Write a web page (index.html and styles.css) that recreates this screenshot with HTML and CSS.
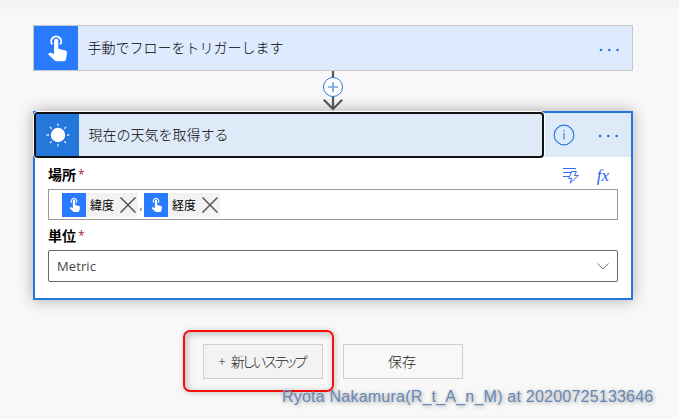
FILE: index.html
```html
<!DOCTYPE html>
<html lang="ja">
<head>
<meta charset="utf-8">
<title>フロー</title>
<link rel="stylesheet" href="styles.css">
</head>
<body>
<svg class="defs" width="0" height="0" aria-hidden="true">
  <symbol id="touch" viewBox="0 0 22 29">
    <path d="M5.200 10.400A5 5 0 1 1 13.200 10.400" fill="none" stroke="currentColor" stroke-width="1.900"/>
    <path d="M7.100 7a2.100 2.100 0 0 1 4.200 0v8l7.200 1.800q1.800.6 1.600 2.500l-1.100 6.200q-.4 2-2.400 2h-7q-1.300 0-2.200-.9l-6.300-6 .9-1.100q.7-.7 1.700-.4l3.400 1.200z" transform="translate(0 -.3)" fill="currentColor"/>
  </symbol>
</svg>
<div class="topbar"></div>
<main class="flow">
  <section class="trigger">
    <div class="tile"><svg class="hand"><use href="#touch"/></svg></div>
    <h2 class="title">手動でフローをトリガーします</h2>
    <svg class="dots" viewBox="0 0 22 4"><circle cx="2" cy="2" r="1.300"/><circle cx="10.300" cy="2" r="1.300"/><circle cx="18.600" cy="2" r="1.300"/></svg>
  </section>
  <svg class="connector" viewBox="0 0 40 40">
    <path d="M20 0V38M10.800 28.800L20 38l9.200-9.200" fill="none" stroke="#555" stroke-width="2.200"/>
    <circle cx="20" cy="16" r="9.500" fill="#fff" stroke="#2478dc"/>
    <path d="M20 11v10M15 16h10" stroke="#6aa5e8" stroke-width="1.700"/>
  </svg>
  <section class="action">
    <header class="head">
      <div class="focus">
        <div class="tile sun-tile">
          <svg class="sun" viewBox="0 0 24 24"><circle cx="12" cy="12" r="7.200" fill="#fff"/><path d="M12 .5v2.500M12 21v2.500M.5 12H3M21 12h2.500M3.900 3.900l1.800 1.800M18.300 18.300l1.800 1.800M3.900 20.100l1.800-1.800M18.300 5.700l1.800-1.800" stroke="#d6e8fb" stroke-width="1.300"/></svg>
        </div>
        <h2 class="title">現在の天気を取得する</h2>
      </div>
      <svg class="info" viewBox="0 0 22 22"><circle cx="11" cy="11" r="9.800" fill="none" stroke="#2b7bd9" stroke-width="1.200"/><path d="M11 9v6.500M11 6v1.600" stroke="#5595e0" stroke-width="1.500"/></svg>
      <svg class="dots" viewBox="0 0 22 4"><circle cx="2" cy="2" r="1.300"/><circle cx="10.300" cy="2" r="1.300"/><circle cx="18.600" cy="2" r="1.300"/></svg>
    </header>
    <div class="body">
      <div class="label">場所<span class="req">*</span>
        <div class="tools">
          <svg class="dyn" viewBox="0 0 18 18"><path d="M1 1.500h13M1 5.500h13M1 9.500h6" stroke="#2b6ff5" stroke-width="1.100"/><path d="M9.700 4.500h4.800l-2 4h4L8 16.200l1.800-4.700H6.700z" fill="#fff" stroke="#3a6cf0"/></svg>
          <span class="fx">fx</span>
        </div>
      </div>
      <div class="input">
        <span class="token"><span class="chip"><svg><use href="#touch"/></svg></span><span>緯度</span><svg class="x" viewBox="0 0 16 16"><path d="M.5.5l15 15M15.500.5l-15 15" stroke="#555" stroke-width="1.500"/></svg></span>
        <span class="comma">,</span>
        <span class="token"><span class="chip"><svg><use href="#touch"/></svg></span><span>経度</span><svg class="x" viewBox="0 0 16 16"><path d="M.5.5l15 15M15.500.5l-15 15" stroke="#555" stroke-width="1.500"/></svg></span>
      </div>
      <div class="label unit">単位<span class="req">*</span></div>
      <div class="select"><span>Metric</span><svg viewBox="0 0 12 7"><path d="M.5.5L6 6 11.500.5" fill="none" stroke="#777"/></svg></div>
    </div>
  </section>
  <div class="buttons">
    <button class="btn new"><span class="plus">+</span><span class="narrow">新しいステップ</span></button>
    <button class="btn">保存</button>
  </div>
</main>
<div class="marker"></div>
<div class="credit">Ryota Nakamura(R_t_A_n_M) at 20200725133646</div>
</body>
</html>
```

FILE: styles.css
```css
* { box-sizing: border-box; }
body {
  margin: 0;
  height: 419px;
  overflow: hidden;
  position: relative;
  background: #f8f8f8;
  color: #000;
  font-family: "Open Sans", "Noto Sans CJK JP", sans-serif;
  font-size: 14px;
}
svg { display: block; flex: none; }
.defs { position: absolute; }
.topbar { height: 9px; background: #f3f3f3; }
.flow { width: 600px; margin: 16px 0 0 33px; }
.trigger {
  display: flex;
  align-items: center;
  height: 46px;
  border: 1px solid #c8c8c8;
  background: #deebff;
}
.tile {
  display: flex;
  align-items: center;
  justify-content: center;
  width: 44px;
  height: 44px;
  background: #287aff;
  color: #fff;
}
.hand { width: 22px; height: 29px; margin: 0 0 0 3px; }
.title {
  flex: 1;
  margin: 0 0 0 9.500px;
  font-size: 14px;
  font-weight: 300;
  line-height: 20px;
}
.dots { width: 22px; height: 4px; margin: 3px 11px 0 0; fill: #2176d9; }
.connector { width: 40px; height: 40px; margin: 0 auto; }
.action {
  height: 189px;
  border: 2px solid #2478dc;
  background: #fff;
  box-shadow: 0 0 14px rgba(0, 0, 0, .32);
}
.head { display: flex; align-items: center; height: 44px; background: #deeaf8; }
.focus {
  display: flex;
  align-items: center;
  width: 510px;
  height: 46px;
  margin: -1px 0 0 -1px;
  border: 2px solid #111;
  border-radius: 4px;
  background: #deeaf8;
  box-shadow: 0 0 0 1px #fff;
}
.sun-tile { width: 43px; height: 42px; background: #2478dc; }
.sun { width: 24px; height: 24px; }
.info { width: 22px; height: 22px; margin: 0 auto 0 9px; }
.head .dots { margin: 2px 11px 0 0; }
.body { padding: 8px 13px 0; }
.label {
  display: flex;
  align-items: center;
  height: 18px;
  font-weight: 700;
  font-size: 14px;
}
.req { margin-left: 2px; color: #a4262c; font-weight: 400; font-size: 12px; }
.tools { display: flex; align-items: center; margin: 3px 9px 0 auto; gap: 17px; }
.dyn { width: 18px; height: 18px; }
.fx {
  font: italic 400 17px/18px "Liberation Serif", serif;
  color: #2b62f0;
}
.input {
  display: flex;
  align-items: center;
  height: 31px;
  margin-top: 6px;
  padding-left: 13px;
  border: 1px solid #999;
}
.token {
  display: flex;
  align-items: center;
  width: 76px;
  height: 24px;
  background: #f2f2f2;
  font-size: 12px;
}
.chip {
  display: flex;
  align-items: center;
  justify-content: center;
  width: 24px;
  height: 24px;
  margin-right: 4px;
  background: #287aff;
  color: #fff;
}
.chip svg { width: 12px; height: 16px; margin-left: 2px; }
.chip svg use { transform-origin: 0 0; }
.x { width: 16px; height: 16px; margin-left: 5.500px; }
.comma { width: 6px; text-align: center; font-size: 12px; color: #555; }
.unit { margin-top: 6px; }
.select {
  display: flex;
  align-items: center;
  justify-content: space-between;
  height: 32px;
  margin-top: 6px;
  padding: 0 8px;
  border: 1px solid #666;
  border-radius: 2px;
  color: #444;
  font-size: 13px;
  letter-spacing: .1px;
}
.select svg { width: 12px; height: 7px; }
.buttons { display: flex; gap: 20px; margin: 44px 0 0 170px; }
.btn {
  display: flex;
  align-items: center;
  justify-content: center;
  width: 120px;
  height: 35px;
  padding: 0 2px 2px 0;
  border: 1px solid #cfcfcf;
  background: transparent;
  color: #222;
  font: 300 14px "Open Sans", "Noto Sans CJK JP", sans-serif;
}
.new { background: #f3f3f3; }
.plus { margin-right: 5px; font-size: 13px; }
.narrow { font-feature-settings: "palt"; letter-spacing: -1.900px; }
.marker {
  position: absolute;
  left: 183px;
  top: 330px;
  width: 151px;
  height: 62px;
  border: 2px solid #fb0d0d;
  border-radius: 7px;
  box-shadow: 1px 1px 6px rgba(0, 0, 0, .2), inset 2px 2px 7px rgba(0, 0, 0, .25);
}
.credit {
  position: absolute;
  left: 282px;
  top: 387px;
  font: 16px/20px "Liberation Sans", sans-serif;
  letter-spacing: .22px;
  color: #6787b7;
  white-space: nowrap;
  text-shadow: 1px 1px 4px rgba(0, 0, 0, .4);
}
```
